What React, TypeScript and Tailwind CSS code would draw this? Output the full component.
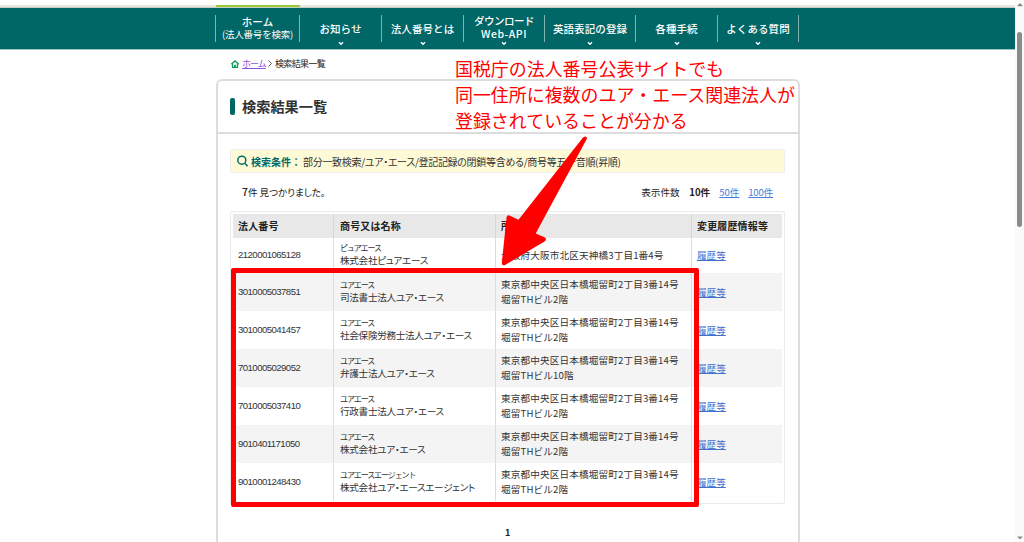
import { FaCaretDown, FaCaretUp } from 'react-icons/fa';

const navItems = [
  { label: 'ホーム', sub: '(法人番号を検索)', width: 'w-[84px]', arrow: false },
  { label: 'お知らせ', width: 'w-[82px]', arrow: true },
  { label: '法人番号とは', width: 'w-[82px]', arrow: true },
  { label: 'ダウンロード', second: 'Web-API', width: 'w-[81px]', arrow: true },
  { label: '英語表記の登録', width: 'w-[91px]', arrow: true },
  { label: '各種手続', width: 'w-[82px]', arrow: true },
  { label: 'よくある質問', width: 'w-[82px]', arrow: true },
];

const tokyo = '東京都中央区日本橋堀留町2丁目3番14号';

const rows = [
  { id: '2120001065128', kana: 'ピュアエース', name: '株式会社ピュアエース', address: ['大阪府大阪市北区天神橋3丁目1番4号'] },
  { id: '3010005037851', kana: 'ユアエース', name: '司法書士法人ユア・エース', address: [tokyo, '堀留THビル2階'] },
  { id: '3010005041457', kana: 'ユアエース', name: '社会保険労務士法人ユア・エース', address: [tokyo, '堀留THビル2階'] },
  { id: '7010005029052', kana: 'ユアエース', name: '弁護士法人ユア・エース', address: [tokyo, '堀留THビル10階'] },
  { id: '7010005037410', kana: 'ユアエース', name: '行政書士法人ユア・エース', address: [tokyo, '堀留THビル2階'] },
  { id: '9010401171050', kana: 'ユアエース', name: '株式会社ユア・エース', address: [tokyo, '堀留THビル2階'] },
  { id: '9010001248430', kana: 'ユアエースエージェント', name: '株式会社ユア・エースエージェント', address: [tokyo, '堀留THビル2階'] },
];

const columns = 'grid grid-cols-[101px_162px_196px_90px]';

function Nav() {
  return (
    <header className="h-[50px] pt-[5px]">
      <div className="h-[3px] bg-[#e9e7dd] border-b border-[#c9cfc8] flex">
        <div className="ml-[216px] w-[84px] h-[2px] bg-[#96cc35]" />
      </div>
      <nav className="h-[42px] bg-[#006666] border-b border-[#9dc4c1] pl-[215px] pt-[7px] flex">
        {navItems.map((item) => (
          <div
            key={item.label}
            className={`${item.width} relative h-[27px] border-l border-[#7fb2b0] last:border-r flex flex-col items-center justify-center text-white font-medium text-[10.5px] leading-[13px] tracking-[0.1px] whitespace-nowrap`}
          >
            <span className={item.second ? '-mt-[3px] tracking-[-0.5px]' : item.sub ? '-mt-[2px]' : ''}>{item.label}</span>
            {item.sub && <span className="text-[9.5px] font-normal tracking-[-0.2px]">{item.sub}</span>}
            {item.second && <span className="text-[10.5px] tracking-[0.5px]">{item.second}</span>}
            {item.arrow && (
              <svg className="absolute -bottom-[4px] left-1/2 -ml-[3px] w-[6px] h-[5px]" viewBox="0 0 6 5" fill="none" stroke="white" strokeWidth="1.4">
                <path d="M1 1.2 L3 3.2 L5 1.2" />
              </svg>
            )}
          </div>
        ))}
      </nav>
    </header>
  );
}

function Breadcrumb() {
  return (
    <div className="h-[29px] pl-[231px] pt-[8px] flex items-start text-[9px] leading-[11px] text-[#222] whitespace-nowrap">
      <svg className="w-[8px] h-[8px] mt-[2px] mr-[3px]" viewBox="0 0 8 8" fill="none" stroke="#0c9c5b" strokeWidth="1.3">
        <path d="M0.3 4.2 L4 0.9 L7.7 4.2" />
        <path d="M1.5 4 V7.3 H6.5 V4" />
        <path d="M4 7.3 V4.8" strokeWidth="1.8" />
      </svg>
      <a className="text-[#8a55d8] underline w-[24px] tracking-[-1px]">ホーム</a>
      <svg className="w-[4px] h-[7px] mt-[2px] ml-[2px] mr-[3px]" viewBox="0 0 4 7" fill="none" stroke="#333" strokeWidth="0.8">
        <path d="M0.5 0.5 L3.5 3.5 L0.5 6.5" />
      </svg>
      <span className="tracking-[-0.65px]">検索結果一覧</span>
    </div>
  );
}

function ResultTable() {
  return (
    <div className="h-[293px] border border-[#ebebeb] rounded-[2px] p-[2px] text-[9.6px] text-[#333]">
      <div className={`${columns} h-[24px] bg-[#e8e8e8] font-bold text-[10px] leading-[24px] text-[#222] tracking-[0.15px] whitespace-nowrap`}>
        <div className="pl-[5px] border-r border-[#d6d6d6]">法人番号</div>
        <div className="pl-[6px] border-r border-[#d6d6d6]">商号又は名称</div>
        <div className="pl-[5px] border-r border-[#d6d6d6]">所在地</div>
        <div className="pl-[5px]">変更履歴情報等</div>
      </div>
      {rows.map((row, i) => (
        <div
          key={row.id}
          className={`${columns} ${i === 0 ? 'h-[35px]' : 'h-[38px]'} ${i % 2 ? 'bg-[#f4f4f4]' : 'bg-white'} whitespace-nowrap`}
        >
          <div className="pl-[5px] border-r border-[#dcdcdc] flex items-center tracking-[-0.55px] [font-family:'Liberation_Sans',sans-serif]">{row.id}</div>
          <div className="pl-[6px] pb-[2px] border-r border-[#dcdcdc] flex flex-col justify-center">
            <span className="text-[8px] leading-[11px] tracking-[-1.1px]">{row.kana}</span>
            <span className="leading-[14px] tracking-[-0.3px] [font-feature-settings:'palt']">{row.name}</span>
          </div>
          <div className="pl-[5px] pb-[1px] border-r border-[#dcdcdc] flex flex-col justify-center leading-[14.4px] tracking-[0.15px]">
            {row.address.map((line) => (
              <span key={line}>{line}</span>
            ))}
          </div>
          <div className="pl-[5px] flex items-center">
            <a className="text-[#3f70d0] underline">履歴等</a>
          </div>
        </div>
      ))}
    </div>
  );
}

function Annotations() {
  return (
    <>
      <p className="absolute left-[455px] top-[55px] text-[17.95px] leading-[26px] text-[#ff0000] whitespace-nowrap">
        国税庁の法人番号公表サイトでも
        <br />
        同一住所に複数のユア・エース関連法人が
        <br />
        登録されていることが分かる
      </p>
      <div className="absolute left-[231px] top-[268px] w-[468px] h-[239px] border-[5px] border-[#ff0000] rounded-[2px]" />
      <svg className="absolute left-[495px] top-[130px] w-[100px] h-[140px]" viewBox="495 130 100 140" fill="#ff0000">
        <path d="M583 137.5 L518.5 219.8 L509.5 215.5 Q507 214.8 506.6 217 L501.8 263 Q502 266 505 265 L544.5 241.5 Q547.5 239 544.5 237.2 L535.7 233.5 L587 138.5 Q586.5 135.2 583 137.5 Z" />
      </svg>
    </>
  );
}

export default function App() {
  return (
    <div className="relative w-[1024px] h-[542px] overflow-hidden bg-white flex [font-family:'Noto_Sans_CJK_JP',sans-serif]">
      <div className="w-[1015px]">
        <Nav />
        <Breadcrumb />
        <main className="ml-[216px] w-[584px] h-[480px] border-2 border-[#dddddd] rounded-t-[6px]">
          <div className="h-[53px] pl-[12px] border-b-2 border-[#dddddd] flex items-center">
            <div className="w-[5px] h-[17px] rounded-[2px] bg-[#006666]" />
            <h1 className="ml-[7px] text-[14.2px] font-bold text-[#333] leading-none">検索結果一覧</h1>
          </div>
          <div className="pl-[12px] pr-[13px] pt-[15px]">
            <div className="h-[24px] bg-[#fffad6] border border-[#eeeeee] rounded-[2px] flex items-center text-[10px] whitespace-nowrap text-[#333]">
              <svg className="ml-[6px] w-[11px] h-[12px]" viewBox="0 0 11 12" fill="none" stroke="#006b69" strokeWidth="1.5">
                <circle cx="4.8" cy="5.2" r="4" />
                <path d="M7.8 8.2 L10.6 11.2" />
              </svg>
              <span className="ml-[3px] w-[52px] font-bold text-[#006b69] text-[10px]">検索条件：</span>
              <span className="tracking-[-0.31px] [font-feature-settings:'palt']">部分一致検索/ユア・エース/登記記録の閉鎖等含める/商号等五十音順(昇順)</span>
            </div>
            <div className="h-[38px] pl-[12px] pr-[12px] flex items-center justify-between text-[9.6px] text-[#222] whitespace-nowrap">
              <p className="[font-feature-settings:'palt'] tracking-[-0.1px]">
                <b className="text-[10.5px] font-medium">7</b>件 見つかりました。
              </p>
              <div className="flex">
                <span className="w-[48px]">表示件数</span>
                <b className="w-[30px]">10件</b>
                <a className="w-[29px] text-[#4d7bd3] underline">50件</a>
                <a className="text-[#4d7bd3] underline tracking-[-0.2px]">100件</a>
              </div>
            </div>
            <ResultTable />
            <div className="pt-[22px] pl-[275px] text-[9px] leading-[14px] font-bold text-[#222]">1</div>
          </div>
        </main>
      </div>
      <div className="w-[9px] bg-[#fafafa] flex flex-col items-center justify-between">
        <FaCaretUp className="w-[8px] h-[9px] text-[#8b8b8b]" />
        <div className="mt-[23px] w-[5px] h-[195px] rounded-full bg-[#8b8b8b]" />
        <div className="flex-1" />
        <FaCaretDown className="w-[8px] h-[9px] text-[#8b8b8b]" />
      </div>
      <Annotations />
    </div>
  );
}
